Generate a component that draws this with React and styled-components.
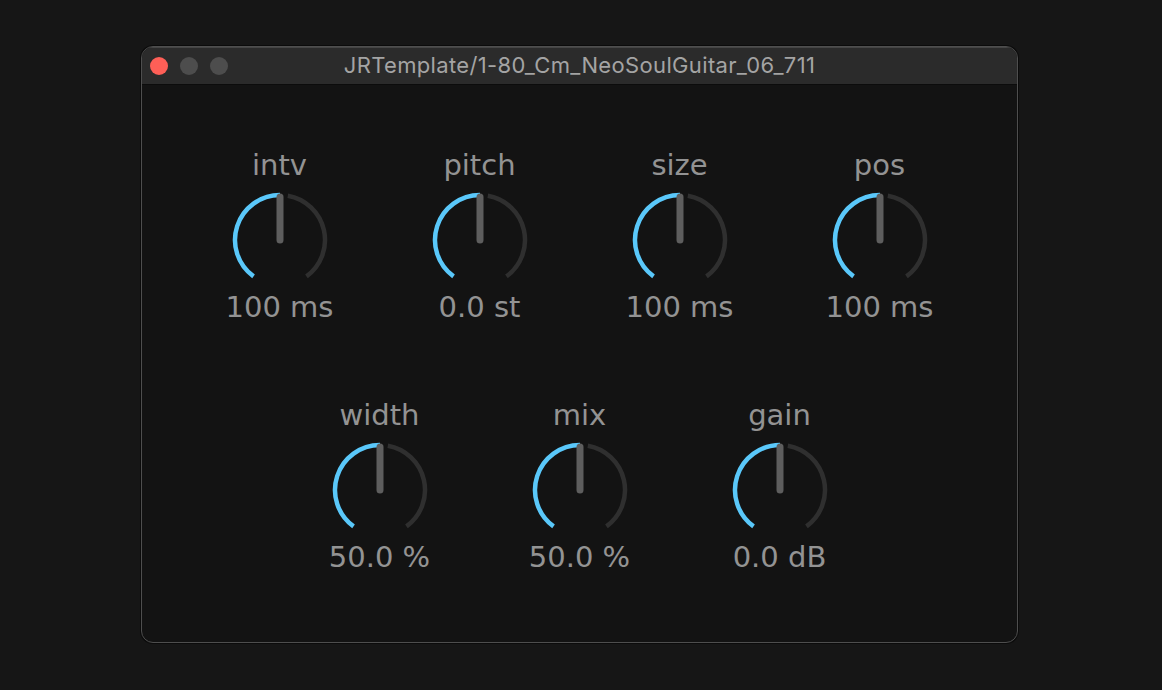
import React from "react";
import styled, { createGlobalStyle } from "styled-components";

const Global = createGlobalStyle`
  html, body { margin: 0; padding: 0; background: #161616; }
  body { width: 1162px; height: 690px; overflow: hidden; }
`;

const Page = styled.div`
  display: flex;
  align-items: flex-start;
  padding: 46px 0 0 141px;
  height: 690px;
  box-sizing: border-box;
`;

const Window = styled.div`
  width: 877px;
  height: 597px;
  box-sizing: border-box;
  border: 1px solid #4e4e4e;
  border-radius: 12px;
  background: #131313;
  overflow: hidden;
  display: flex;
  flex-direction: column;
  box-shadow: 0 0 0 1px #0b0b0b;
`;

const TitleBar = styled.div`
  height: 37px;
  flex: none;
  background: #2b2b2b;
  border-bottom: 1px solid #0c0c0c;
  display: grid;
  grid-template-columns: 1fr auto 1fr;
  align-items: center;
  box-shadow: inset 0 1px 0 #454545;
`;

const Lights = styled.div`
  display: flex;
  gap: 12px;
  padding-left: 8px;
`;

const Light = styled.span`
  width: 18px;
  height: 18px;
  border-radius: 50%;
  background: ${(p) => p.$color};
`;

const Title = styled.div`
  font-family: Inter, "Liberation Sans", sans-serif;
  font-size: 22px;
  letter-spacing: 0.35px;
  color: #a4a4a4;
  white-space: nowrap;
  margin-top: -1px;
`;

const Content = styled.div`
  flex: 1;
  display: flex;
  flex-direction: column;
  align-items: center;
  padding-top: 63px;
  gap: 74px;
`;

const Row = styled.div`
  display: flex;
  justify-content: center;
`;

const Cell = styled.div`
  width: 200px;
  display: flex;
  flex-direction: column;
  align-items: center;
`;

const Text = styled.div`
  font-family: "DejaVu Sans", sans-serif;
  font-size: 29px;
  line-height: 34px;
  height: 34px;
  color: #939393;
  white-space: nowrap;
`;

const KnobSvg = styled.svg`
  display: block;
  width: 108px;
  height: 108px;
`;

const CX = 54;
const CY = 58;
const R = 45;

function pt(deg) {
  const a = (deg * Math.PI) / 180;
  return [CX + R * Math.sin(a), CY - R * Math.cos(a)];
}

function arc(a0, a1) {
  const [x0, y0] = pt(a0);
  const [x1, y1] = pt(a1);
  const large = a1 - a0 > 180 ? 1 : 0;
  return `M ${x0.toFixed(2)} ${y0.toFixed(2)} A ${R} ${R} 0 ${large} 1 ${x1.toFixed(2)} ${y1.toFixed(2)}`;
}

function Knob() {
  return (
    <KnobSvg viewBox="0 0 108 108">
      <path d={arc(10, 144)} fill="none" stroke="#2f2f2f" strokeWidth="4.5" />
      <path d={arc(-144, 0)} fill="none" stroke="#5ac8fa" strokeWidth="4.5" />
      <line
        x1={CX}
        y1={CY - 43}
        x2={CX}
        y2={CY}
        stroke="#5e5e5e"
        strokeWidth="7"
        strokeLinecap="round"
      />
    </KnobSvg>
  );
}

const rows = [
  [
    ["intv", "100 ms"],
    ["pitch", "0.0 st"],
    ["size", "100 ms"],
    ["pos", "100 ms"],
  ],
  [
    ["width", "50.0 %"],
    ["mix", "50.0 %"],
    ["gain", "0.0 dB"],
  ],
];

export default function App() {
  return (
    <>
      <Global />
      <Page>
        <Window>
          <TitleBar>
            <Lights>
              <Light $color="#fe5f57" />
              <Light $color="#4d4d4d" />
              <Light $color="#4d4d4d" />
            </Lights>
            <Title>JRTemplate/1-80_Cm_NeoSoulGuitar_06_711</Title>
            <div />
          </TitleBar>
          <Content>
            {rows.map((r, i) => (
              <Row key={i}>
                {r.map(([label, value]) => (
                  <Cell key={label}>
                    <Text>{label}</Text>
                    <Knob />
                    <Text>{value}</Text>
                  </Cell>
                ))}
              </Row>
            ))}
          </Content>
        </Window>
      </Page>
    </>
  );
}
